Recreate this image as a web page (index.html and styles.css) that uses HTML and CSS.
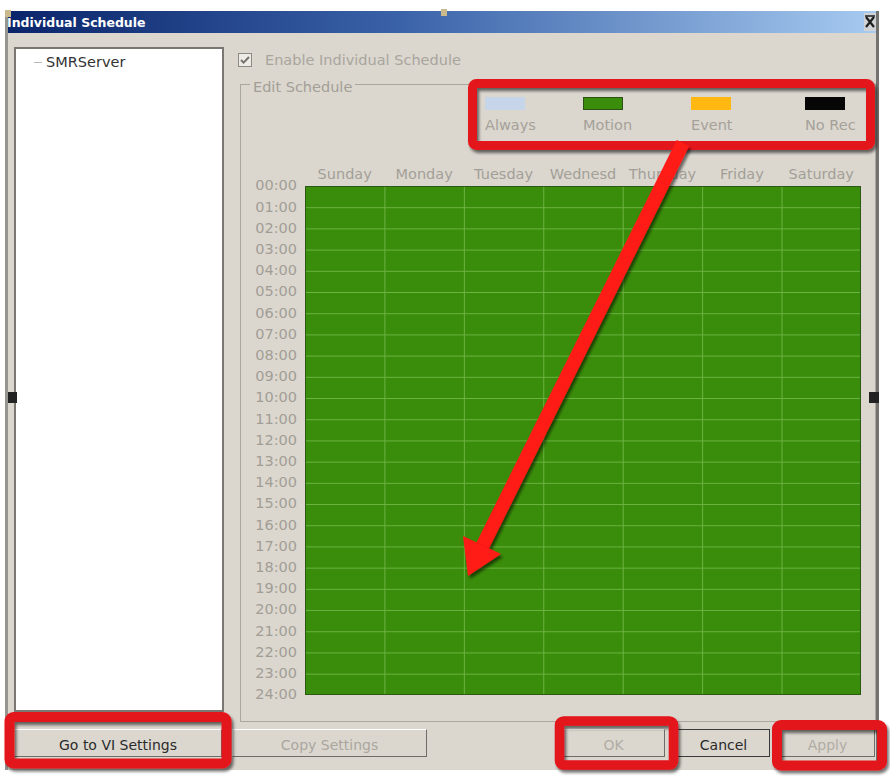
FILE: index.html
```html
<!DOCTYPE html>
<html>
<head>
<meta charset="utf-8">
<title>Individual Schedule</title>
<link rel="stylesheet" href="styles.css">
</head>
<body>
<div class="window">
  <div class="titlebar">
    <span class="title">Individual Schedule</span>
    <span class="close"><svg width="12" height="16" viewBox="0 0 12 16"><path d="M2 3 L10 13 M10 3 L2 13" stroke="#1e1e1e" stroke-width="2.2"/><path d="M1 2 H11" stroke="#1e1e1e" stroke-width="1.5"/></svg></span>
  </div>
  <div class="client">
    <div class="main">
      <div class="tree">
        <div class="node"><span class="dash"></span>SMRServer</div>
      </div>
      <div class="right">
        <label class="enable"><span class="check"><svg width="14" height="14" viewBox="0 0 14 14"><rect x="0.5" y="0.5" width="13" height="13" fill="#ecebe6" stroke="#8d8a84"/><path d="M3 7 L5.6 9.6 L11 4" fill="none" stroke="#74716b" stroke-width="2"/></svg></span>Enable Individual Schedule</label>
        <fieldset class="group">
          <legend>Edit Schedule</legend>
          <div class="legend">
            <div class="legend-item"><span class="swatch always"></span><span class="legend-label">Always</span></div>
            <div class="legend-item"><span class="swatch motion"></span><span class="legend-label">Motion</span></div>
            <div class="legend-item"><span class="swatch event"></span><span class="legend-label">Event</span></div>
            <div class="legend-item"><span class="swatch norec"></span><span class="legend-label">No Rec</span></div>
          </div>
          <div class="schedule">
            <div class="days">
              <span>Sunday</span><span>Monday</span><span>Tuesday</span><span>Wednesd</span><span>Thursday</span><span>Friday</span><span>Saturday</span>
            </div>
            <div class="hours">
              <span>00:00</span><span>01:00</span><span>02:00</span><span>03:00</span><span>04:00</span>
              <span>05:00</span><span>06:00</span><span>07:00</span><span>08:00</span><span>09:00</span>
              <span>10:00</span><span>11:00</span><span>12:00</span><span>13:00</span><span>14:00</span>
              <span>15:00</span><span>16:00</span><span>17:00</span><span>18:00</span><span>19:00</span>
              <span>20:00</span><span>21:00</span><span>22:00</span><span>23:00</span><span>24:00</span>
            </div>
            <div class="grid"></div>
          </div>
        </fieldset>
      </div>
    </div>
    <div class="buttons">
      <div class="btn-group">
        <button class="btn go">Go to VI Settings</button>
        <button class="btn copy">Copy Settings</button>
      </div>
      <div class="btn-group">
        <button class="btn ok">OK</button>
        <button class="btn cancel">Cancel</button>
        <button class="btn apply">Apply</button>
      </div>
    </div>
  </div>
  <span class="handle handle-left"></span>
  <span class="handle handle-right"></span>
  <span class="grip grip-top"></span>
  <span class="grip grip-corner"></span>
</div>
<svg class="annotations" width="890" height="776" viewBox="0 0 890 776">
  <defs>
    <filter id="sh" x="-20%" y="-20%" width="140%" height="140%">
      <feDropShadow dx="2" dy="3" stdDeviation="1.5" flood-color="#000" flood-opacity="0.55"/>
    </filter>
  </defs>
  <g fill="none" stroke="#e3151b" filter="url(#sh)">
    <rect x="472.5" y="83.5" width="398" height="62" rx="4" stroke-width="9"/>
    <rect x="9.5" y="717" width="217" height="46.5" rx="4" stroke-width="10"/>
    <rect x="559.5" y="721" width="114" height="44" rx="4" stroke-width="9.5"/>
    <rect x="777" y="725" width="105" height="40.5" rx="4" stroke-width="10"/>
  </g>
  <g filter="url(#sh)" fill="#ff1a14">
    <line x1="683" y1="143" x2="481" y2="549" stroke="#ff1a14" stroke-width="14"/>
    <polygon points="468,576 463,536 501,554"/>
  </g>
</svg>
</body>
</html>
```
FILE: styles.css
```css
html, body {
  margin: 0;
  padding: 0;
}
body {
  width: 890px;
  height: 776px;
  overflow: hidden;
  position: relative;
  background: #ffffff;
  font-family: "DejaVu Sans", Verdana, sans-serif;
  font-size: 14.5px;
  color: #333;
}
.window {
  position: relative;
  margin: 11px 0 0 5px;
  width: 868px;
  height: 759px;
  border-left: 3px solid #979590;
  border-right: 3px solid #74726e;
  background: #dbd7cf;
  display: flex;
  flex-direction: column;
}
.titlebar {
  height: 22px;
  flex: none;
  display: flex;
  align-items: center;
  justify-content: space-between;
  background: linear-gradient(to right, #0a246a 0%, #3a62a8 45%, #a6caf0 100%);
  overflow: hidden;
}
.title {
  margin-left: -1px;
  color: #fff;
  font-weight: bold;
  font-size: 12.5px;
  white-space: nowrap;
}
.close {
  width: 12px;
  height: 18px;
  background: #cfd3d6;
  display: flex;
  align-items: center;
  justify-content: center;
}
.client {
  flex: 1;
  padding: 14px 0 0 6px;
  display: flex;
  flex-direction: column;
}
.main {
  display: grid;
  grid-template-columns: 210px 1fr;
  column-gap: 8px;
  align-items: start;
}
.tree {
  height: 665px;
  box-sizing: border-box;
  border: 2px solid #7a7772;
  background: #fff;
}
.node {
  padding: 4px 0 0 18px;
  line-height: 18px;
  display: flex;
  align-items: center;
  color: #333;
}
.dash {
  width: 8px;
  height: 0;
  border-top: 1px solid #b8b8b8;
  margin-right: 4px;
}
.right {
  display: flex;
  flex-direction: column;
}
.enable {
  height: 26px;
  display: flex;
  align-items: center;
  padding-left: 6px;
  color: #a9a59d;
}
.check {
  width: 14px;
  height: 14px;
  margin-right: 13px;
  display: flex;
}
.group {
  margin: 0 0 0 8px;
  padding: 2px 14px 26px 9px;
  border: 1px solid #aba79f;
  min-width: 0;
}
.group legend {
  margin: 0;
  padding: 6px 3px 0 3px;
  line-height: 16px;
  color: #a39f97;
}
.legend {
  margin-left: 235px;
  display: grid;
  grid-template-columns: 98px 108px 114px 56px;
}
.legend-item {
  display: flex;
  flex-direction: column;
  align-items: flex-start;
}
.swatch {
  width: 40px;
  height: 13px;
  box-sizing: border-box;
}
.always { background: #c6d5ea; }
.motion { background: #3a8d0a; border: 1px solid #2a5314; }
.event { background: #ffb812; }
.norec { background: #060606; }
.legend-label {
  margin-top: 7px;
  line-height: 16px;
  color: #a5a199;
  white-space: nowrap;
}
.schedule {
  margin-top: 33px;
  display: grid;
  grid-template-columns: 50px 556px;
  grid-template-rows: 16px 509px;
  column-gap: 5px;
  row-gap: 4px;
}
.days {
  grid-column: 2;
  grid-row: 1;
  display: grid;
  grid-template-columns: repeat(7, 1fr);
  line-height: 16px;
  text-align: center;
  color: #a39f97;
  white-space: nowrap;
}
.hours {
  grid-column: 1;
  grid-row: 2;
  align-self: start;
  margin-top: -10.6px;
  display: grid;
  grid-template-rows: repeat(25, 21.208px);
  line-height: 21.208px;
  text-align: right;
  padding-right: 3px;
  color: #a29e96;
}
.grid {
  grid-column: 2;
  grid-row: 2;
  border: 1px solid #2c5a14;
  background-color: #3a8d0a;
  background-image:
    linear-gradient(to right, #6cb244 1px, transparent 1px),
    linear-gradient(to bottom, #6cb244 1px, transparent 1px);
  background-size: calc(100% / 7) 100%, 100% calc(100% / 24);
  background-origin: border-box;
  background-clip: border-box;
}
.buttons {
  margin-top: 7px;
  display: flex;
  justify-content: space-between;
  height: 28px;
}
.btn-group {
  display: flex;
}
.btn {
  height: 28px;
  box-sizing: border-box;
  padding: 4px 0 0 0;
  margin: 0;
  background: #dbd7cf;
  border: 1px solid;
  border-color: #ffffff #6e6c68 #6e6c68 #ffffff;
  font-family: inherit;
  font-size: 14px;
  color: #2a2a2a;
}
.go { width: 208px; }
.copy { width: 195px; margin-left: 10px; color: #aaa69f; }
.ok { width: 103px; color: #b0aca5; }
.cancel { width: 93px; margin-left: 12px; border-color: #3a3a3a; }
.apply { width: 95px; margin-left: 10px; margin-right: 1px; color: #b0aca5; }
.handle {
  position: absolute;
  top: 381px;
  height: 11px;
  background: #222;
  z-index: 2;
}
.handle-left { left: 0; width: 9px; }
.handle-right { right: -3px; width: 10px; }
.grip {
  position: absolute;
  background: #c9b98c;
  z-index: 2;
}
.grip-top { left: 433px; top: -2px; width: 6px; height: 7px; }
.grip-corner { left: -3px; top: -1px; width: 6px; height: 7px; }
.annotations {
  position: absolute;
  left: 0;
  top: 0;
  pointer-events: none;
  z-index: 5;
}
```
